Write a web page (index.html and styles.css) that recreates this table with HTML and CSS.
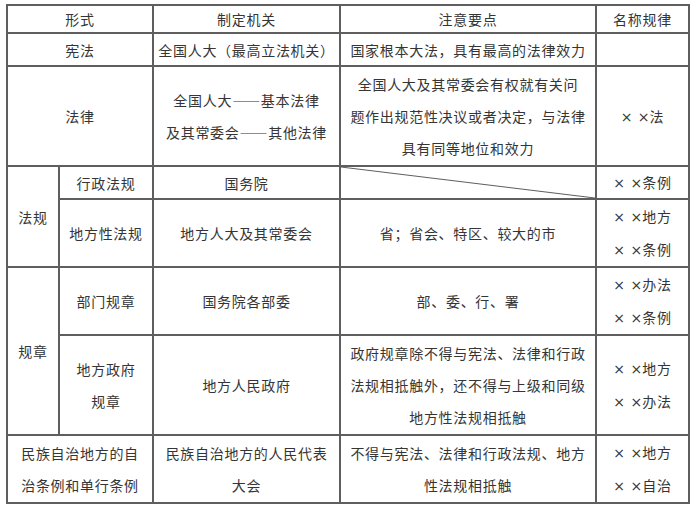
FILE: index.html
```html
<!DOCTYPE html>
<html lang="zh-CN">
<head>
<meta charset="utf-8">
<title>法律形式</title>
<link rel="stylesheet" href="styles.css">
</head>
<body>
<table class="law">
  <colgroup>
    <col class="c1"><col class="c2"><col class="c3"><col class="c4"><col class="c5">
  </colgroup>
  <tr class="h28">
    <td colspan="2">形式</td><td>制定机关</td><td>注意要点</td><td>名称规律</td>
  </tr>
  <tr class="h33">
    <td colspan="2">宪法</td><td>全国人大（最高立法机关）</td><td>国家根本大法，具有最高的法律效力</td><td></td>
  </tr>
  <tr class="h100 ml">
    <td colspan="2">法律</td>
    <td>全国人大——基本法律<br>及其常委会——其他法律</td>
    <td>全国人大及其常委会有权就有关问<br>题作出规范性决议或者决定，与法律<br>具有同等地位和效力</td>
    <td><span class="xx">× ×</span>法</td>
  </tr>
  <tr class="h33">
    <td rowspan="2">法规</td><td>行政法规</td><td>国务院</td><td class="diag"></td><td><span class="xx">× ×</span>条例</td>
  </tr>
  <tr class="h67 ml">
    <td>地方性法规</td><td>地方人大及其常委会</td><td>省；省会、特区、较大的市</td><td><span class="xx">× ×</span>地方<br><span class="xx">× ×</span>条例</td>
  </tr>
  <tr class="h66 ml">
    <td rowspan="2">规章</td><td>部门规章</td><td>国务院各部委</td><td>部、委、行、署</td><td><span class="xx">× ×</span>办法<br><span class="xx">× ×</span>条例</td>
  </tr>
  <tr class="h100 ml">
    <td>地方政府<br>规章</td><td>地方人民政府</td>
    <td>政府规章除不得与宪法、法律和行政<br>法规相抵触外，还不得与上级和同级<br>地方性法规相抵触</td>
    <td><span class="xx">× ×</span>地方<br><span class="xx">× ×</span>办法</td>
  </tr>
  <tr class="h66 ml">
    <td colspan="2">民族自治地方的自<br>治条例和单行条例</td>
    <td>民族自治地方的人民代表<br>大会</td>
    <td>不得与宪法、法律和行政法规、地方<br>性法规相抵触</td>
    <td><span class="xx">× ×</span>地方<br><span class="xx">× ×</span>自治</td>
  </tr>
</table>
</body>
</html>
```

FILE: styles.css
```css
html, body {
  margin: 0;
  padding: 0;
  background: #ffffff;
}
body {
  padding: 4px 0 0 6px;
  font-family: "Noto Sans CJK SC", "Noto Sans", sans-serif;
  font-size: 14px;
  letter-spacing: 0.7px;
  color: #353535;
}
.law {
  border-collapse: collapse;
  table-layout: fixed;
  width: 682px;
}
.law td {
  border: 2px solid #5e5e5e;
  padding: 0;
  text-align: center;
  vertical-align: middle;
  white-space: nowrap;
  line-height: 22px;
}
.law .ml td {
  line-height: 32px;
}
.c1 { width: 52px; }
.c2 { width: 94px; }
.c3 { width: 187px; }
.c4 { width: 256px; }
.c5 { width: 93px; }
.h28 { height: 28px; }
.h33 { height: 33px; }
.h66 { height: 66px; }
.h67 { height: 67px; }
.h100 { height: 100px; }
.xx {
  font-family: "DejaVu Sans", "Liberation Sans", sans-serif;
  letter-spacing: 0;
  word-spacing: 1px;
}
.law td.diag {
  background: linear-gradient(to top right, transparent calc(50% - 1px), #5e5e5e 50%, transparent calc(50% + 1px));
}
```
